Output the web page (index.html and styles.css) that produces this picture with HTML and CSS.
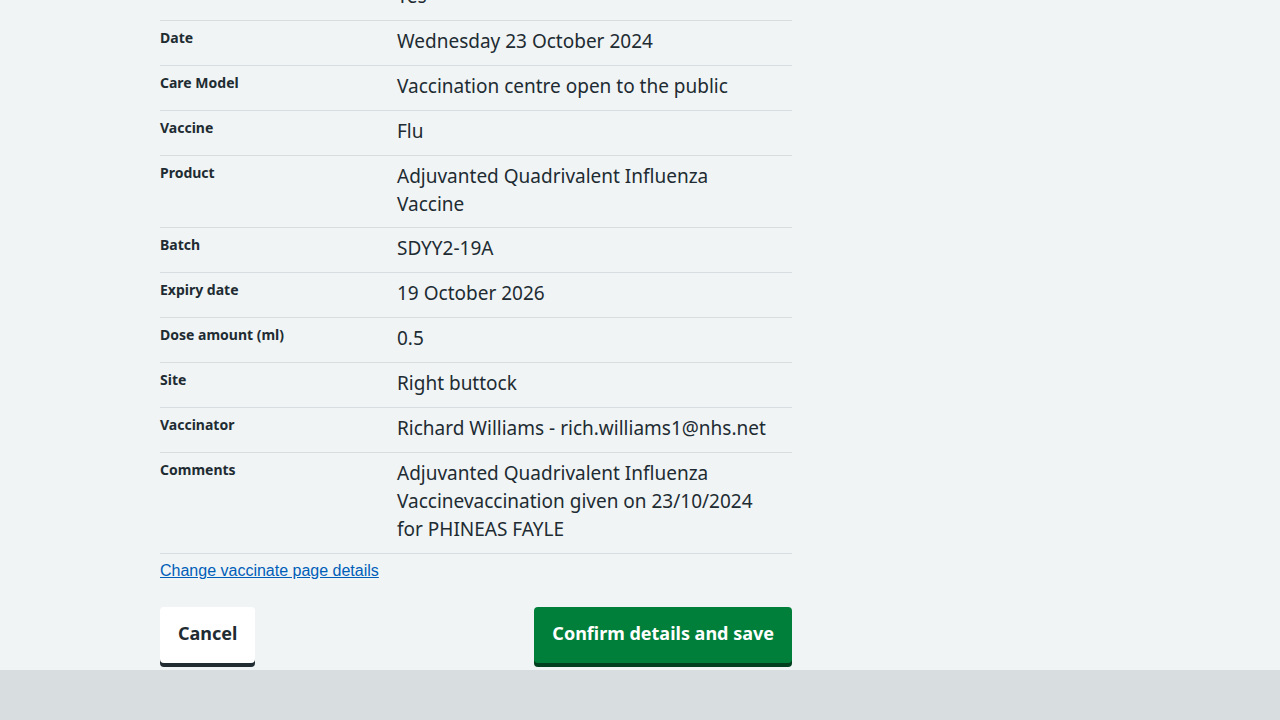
FILE: index.html
```html
<!DOCTYPE html>
<html lang="en">
<head>
<meta charset="utf-8">
<title>Check and confirm</title>
<link rel="stylesheet" href="styles.css">
</head>
<body>
<main class="page">
  <div class="container">
    <dl class="summary">
      <div class="row">
        <dt class="key">Consent</dt>
        <dd class="value">Yes</dd>
      </div>
      <div class="row">
        <dt class="key">Date</dt>
        <dd class="value">Wednesday 23 October 2024</dd>
      </div>
      <div class="row">
        <dt class="key">Care Model</dt>
        <dd class="value">Vaccination centre open to the public</dd>
      </div>
      <div class="row">
        <dt class="key">Vaccine</dt>
        <dd class="value">Flu</dd>
      </div>
      <div class="row">
        <dt class="key">Product</dt>
        <dd class="value">Adjuvanted Quadrivalent Influenza Vaccine</dd>
      </div>
      <div class="row">
        <dt class="key">Batch</dt>
        <dd class="value">SDYY2-19A</dd>
      </div>
      <div class="row">
        <dt class="key">Expiry date</dt>
        <dd class="value">19 October 2026</dd>
      </div>
      <div class="row">
        <dt class="key">Dose amount (ml)</dt>
        <dd class="value">0.5</dd>
      </div>
      <div class="row">
        <dt class="key">Site</dt>
        <dd class="value">Right buttock</dd>
      </div>
      <div class="row">
        <dt class="key">Vaccinator</dt>
        <dd class="value">Richard Williams - rich.williams1@nhs.net</dd>
      </div>
      <div class="row">
        <dt class="key">Comments</dt>
        <dd class="value">Adjuvanted Quadrivalent Influenza Vaccinevaccination given on 23/10/2024 for PHINEAS FAYLE</dd>
      </div>
    </dl>
    <div class="change"><a href="#" class="link">Change vaccinate page details</a></div>
    <div class="actions">
      <button class="btn btn-secondary" type="button">Cancel</button>
      <button class="btn btn-primary" type="button">Confirm details and save</button>
    </div>
  </div>
</main>
<footer class="footer"></footer>
</body>
</html>
```

FILE: styles.css
```css
html, body {
  margin: 0;
  padding: 0;
}
body {
  background: #d8dde0;
  color: #212b32;
  font-family: "Noto Sans", "Open Sans", sans-serif;
}
.page {
  background: #f0f4f5;
  margin-top: -25px;
  padding-bottom: 7px;
}
.container {
  width: 632px;
  margin-left: 160px;
}
.summary {
  margin: 0;
}
.row {
  display: grid;
  grid-template-columns: 237px 1fr;
  border-top: 1px solid #d8dde0;
}
.row:last-child {
  border-bottom: 1px solid #d8dde0;
}
.key {
  margin: 0;
  padding: 7px 0 8px 0;
  font-size: 14px;
  line-height: 20px;
  font-weight: 700;
}
.value {
  margin: 0;
  padding: 6px 24px 9.9px 0;
  font-size: 19px;
  line-height: 28px;
}
.change {
  margin-top: 5px;
  font-family: "Liberation Sans", Arial, sans-serif;
  font-size: 16px;
  line-height: 24px;
}
.link {
  color: #005eb8;
  text-decoration: underline;
}
.actions {
  display: flex;
  justify-content: space-between;
  align-items: flex-start;
  margin-top: 24px;
}
.btn {
  font-family: "Noto Sans", "Open Sans", sans-serif;
  font-size: 18px;
  line-height: 28px;
  font-weight: 700;
  padding: 12px 18px 16px;
  border: 0;
  border-radius: 4px;
  cursor: pointer;
}
.btn-secondary {
  background: #ffffff;
  color: #212b32;
  box-shadow: 0 4px 0 #212b32;
}
.btn-primary {
  background: #007f3b;
  color: #ffffff;
  box-shadow: 0 4px 0 #00401e;
}
.footer {
  height: 80px;
}
```
